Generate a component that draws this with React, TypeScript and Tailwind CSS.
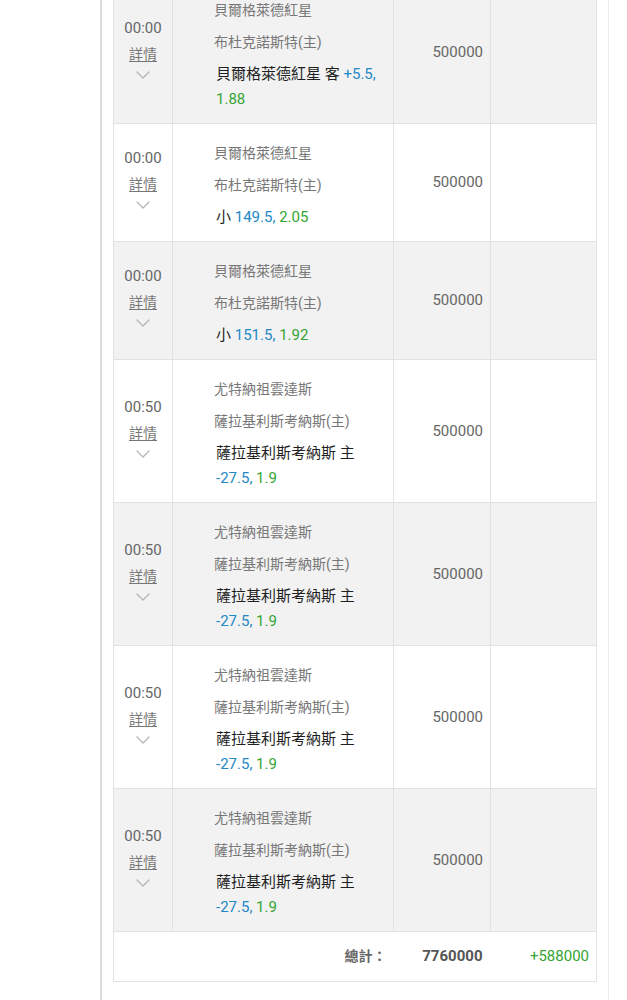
import { ChevronDown } from "lucide-react";

type Bet = {
	time: string;
	home: string;
	away: string;
	pick: string;
	line: string;
	odds: string;
	amount: string;
};

const bets: Bet[] = [
	{ time: "00:00", home: "貝爾格萊德紅星", away: "布杜克諾斯特(主)", pick: "貝爾格萊德紅星 客", line: "+5.5,", odds: "1.88", amount: "500000" },
	{ time: "00:00", home: "貝爾格萊德紅星", away: "布杜克諾斯特(主)", pick: "小", line: "149.5,", odds: "2.05", amount: "500000" },
	{ time: "00:00", home: "貝爾格萊德紅星", away: "布杜克諾斯特(主)", pick: "小", line: "151.5,", odds: "1.92", amount: "500000" },
	{ time: "00:50", home: "尤特納祖雲達斯", away: "薩拉基利斯考納斯(主)", pick: "薩拉基利斯考納斯 主", line: "-27.5,", odds: "1.9", amount: "500000" },
	{ time: "00:50", home: "尤特納祖雲達斯", away: "薩拉基利斯考納斯(主)", pick: "薩拉基利斯考納斯 主", line: "-27.5,", odds: "1.9", amount: "500000" },
	{ time: "00:50", home: "尤特納祖雲達斯", away: "薩拉基利斯考納斯(主)", pick: "薩拉基利斯考納斯 主", line: "-27.5,", odds: "1.9", amount: "500000" },
	{ time: "00:50", home: "尤特納祖雲達斯", away: "薩拉基利斯考納斯(主)", pick: "薩拉基利斯考納斯 主", line: "-27.5,", odds: "1.9", amount: "500000" },
];

export default function App() {
	return (
		<div
			className="flex min-h-screen w-[627px] overflow-hidden bg-white"
			style={{ fontFamily: "Roboto, 'Noto Sans CJK TC', sans-serif" }}
		>
			<div className="w-[100px] shrink-0" />
			<div className="w-[509px] shrink-0 border-l-2 border-r border-l-[#dcdcdc] border-r-[#ececec] pl-[11px] pr-[12px]">
				<table className="mt-[-20px] w-[483px] table-fixed border-collapse">
					<colgroup>
						<col className="w-[59px]" />
						<col className="w-[221px]" />
						<col className="w-[97px]" />
						<col className="w-[106px]" />
					</colgroup>
					<tbody>
						{bets.map((bet, i) => (
							<tr key={i} className={i % 2 === 0 ? "bg-[#f2f2f2]" : "bg-white"}>
								{/* time + details */}
								<td className="border border-[#e2e2e2] text-center align-middle">
									<div className="flex flex-col items-center">
										<div className="text-[15px] leading-[20px] text-[#666]">{bet.time}</div>
										<div className="mt-[6px] text-[14px] leading-[20px] text-[#777] underline underline-offset-2">詳情</div>
										<ChevronDown size={24} strokeWidth={1.3} className="-mt-[1px] text-[#b5b5b5]" />
									</div>
								</td>
								{/* match + pick */}
								<td className="border border-[#e2e2e2] pl-[41px] pr-1 pt-[19px] pb-[11px] align-top">
									<div className="text-[14px] leading-[20px] text-[#777]">{bet.home}</div>
									<div className="mt-[12px] text-[14px] leading-[20px] text-[#777]">{bet.away}</div>
									<div className="mt-[10px] pl-[2px] text-[15px] leading-[25px] text-[#1f1f1f]">
										{bet.pick} <span className="text-[#2388c6]">{bet.line}</span>{" "}
										<span className="text-[#34a534]">{bet.odds}</span>
									</div>
								</td>
								{/* stake */}
								<td className="border border-[#e2e2e2] pr-[7px] text-right align-middle text-[15px] text-[#666]">
									{bet.amount}
								</td>
								<td className="border border-[#e2e2e2]" />
							</tr>
						))}
						<tr className="bg-white">
							<td colSpan={2} className="h-[50px] border-y border-l border-[#e2e2e2] pr-[7px] text-right align-middle text-[14px] font-bold text-[#666]">
								總計：
							</td>
							<td className="h-[50px] border-y border-[#e2e2e2] pr-[8px] text-right align-middle text-[15px] font-bold text-[#555]">
								7760000
							</td>
							<td className="h-[50px] border-y border-r border-[#e2e2e2] pr-[7px] text-right align-middle text-[15px] text-[#34a534]">
								+588000
							</td>
						</tr>
					</tbody>
				</table>
			</div>
		</div>
	);
}
